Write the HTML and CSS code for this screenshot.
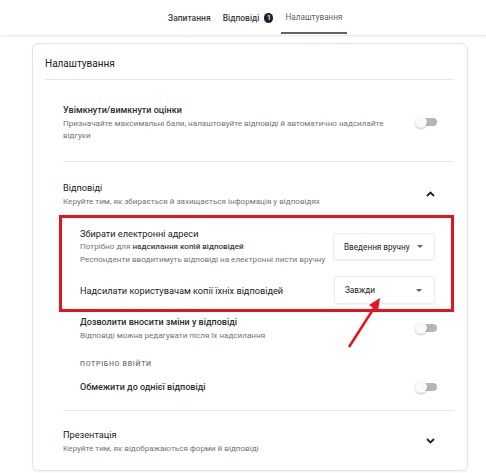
FILE: index.html
```html
<!DOCTYPE html>
<html lang="uk">
<head>
  <meta charset="UTF-8">
  <title>Налаштування</title>
  <link rel="stylesheet" href="styles.css">
</head>
<body>
  <!-- Tabs -->
  <div class="tabs">
    <div class="tab">Запитання</div>
    <div class="tab">Відповіді <span class="badge">1</span></div>
    <div class="tab active">Налаштування</div>
  </div>

  <div class="card">
    <div class="card-title">Налаштування</div>

    <!-- Grading -->
    <div class="section grading">
      <div class="row">
        <div class="text">
          <div class="title strong">Увімкнути/вимкнути оцінки</div>
          <div class="desc">Призначайте максимальні бали, налаштовуйте відповіді й автоматично надсилайте відгуки</div>
        </div>
        <div class="toggle"></div>
      </div>
    </div>

    <!-- Responses -->
    <div class="section responses">
      <div class="row">
        <div class="text">
          <div class="title">Відповіді</div>
          <div class="desc">Керуйте тим, як збирається й захищається інформація у відповідях</div>
        </div>
        <svg class="chevron" width="9" height="6" viewBox="0 0 9 6"><polyline points="1,5 4.5,1.5 8,5" fill="none" stroke="#202124" stroke-width="1.8"/></svg>
      </div>

      <div class="highlight">
        <div class="sub-row first">
          <div class="text">
            <div class="title">Збирати електронні адреси</div>
            <div class="desc">Потрібно для <b>надсилання копій відповідей</b></div>
            <div class="desc">Респонденти вводитимуть відповіді на електронні листи вручну</div>
          </div>
          <div class="select wide">Введення вручну <span class="caret"></span></div>
        </div>
        <div class="sub-row second">
          <div class="text">
            <div class="title">Надсилати користувачам копії їхніх відповідей</div>
          </div>
          <div class="select">Завжди <span class="caret"></span></div>
        </div>
      </div>

      <div class="sub-row edit">
        <div class="text">
          <div class="title strong">Дозволити вносити зміни у відповіді</div>
          <div class="desc">Відповіді можна редагувати після їх надсилання</div>
        </div>
        <div class="toggle"></div>
      </div>

      <div class="label">Потрібно ввійти</div>

      <div class="sub-row limit">
        <div class="text">
          <div class="title strong">Обмежити до однієї відповіді</div>
        </div>
        <div class="toggle"></div>
      </div>
    </div>

    <!-- Presentation -->
    <div class="section presentation">
      <div class="row">
        <div class="text">
          <div class="title">Презентація</div>
          <div class="desc">Керуйте тим, як відображаються форми й відповіді</div>
        </div>
        <svg class="chevron" width="9" height="6" viewBox="0 0 9 6"><polyline points="1,1 4.5,4.5 8,1" fill="none" stroke="#202124" stroke-width="1.8"/></svg>
      </div>
    </div>
  </div>

  <!-- Annotation arrow -->
  <svg class="arrow" width="486" height="473" viewBox="0 0 486 473">
    <line x1="349" y1="347" x2="374" y2="308" stroke="#e3141c" stroke-width="2.5"/>
    <polygon points="380,298 369,305 378,311" fill="#e3141c"/>
  </svg>
</body>
</html>
```

FILE: styles.css
```css
* {
  margin: 0;
  padding: 0;
  box-sizing: border-box;
}

body {
  font-family: Roboto, "Noto Sans", Arial, sans-serif;
  background: #fff;
  color: #202124;
  width: 486px;
  height: 473px;
  overflow: hidden;
  position: relative;
}

/* Tabs */
.tabs {
  display: flex;
  height: 36px;
  padding-left: 162px;
  border-bottom: 1px solid #ececec;
  box-shadow: 0 1px 2px rgba(0, 0, 0, 0.06);
}

.tab {
  display: flex;
  align-items: center;
  padding: 0 6px;
  font-size: 8.5px;
  font-weight: 500;
  color: #3c4043;
  height: 34px;
  padding-top: 1px;
}

.tab.active {
  margin-left: 2px;
  color: #5f6368;
  font-weight: 400;
  border-bottom: 2px solid #5f6368;
  padding: 0 4px;
  padding-top: 2px;
  font-size: 8.2px;
}

.badge {
  display: inline-flex;
  align-items: center;
  justify-content: center;
  width: 9px;
  height: 10px;
  border-radius: 5px;
  background: #202124;
  color: #fff;
  font-size: 7px;
  margin-left: 5px;
}

/* Card */
.card {
  margin: 7px 18px 0 32px;
  border: 1px solid #e3e3e3;
  border-radius: 6px;
  box-shadow: 0 1px 2px rgba(0, 0, 0, 0.06);
  padding: 0 13px 0 12px;
  height: 428px;
}

.card-title {
  font-size: 10px;
  height: 36px;
  padding-top: 14px;
  border-bottom: 1px solid #e8e8e8;
}

.section {
  margin-left: 18px;
}

.section + .section {
  border-top: 1px solid #e8e8e8;
}

.row,
.sub-row {
  display: flex;
  align-items: center;
  justify-content: space-between;
}

.text {
  flex: 1;
}

.title {
  font-size: 9.2px;
  line-height: 14px;
  color: #202124;
}

.title.strong {
  font-weight: 500;
  font-size: 9px;
  color: #2d2e30;
}

.desc {
  font-size: 8.1px;
  line-height: 12px;
  color: #70757a;
}

.desc b {
  font-weight: 500;
  color: #3c4043;
}

.grading {
  padding: 23px 0 20px;
}

.grading .desc {
  max-width: 335px;
}

.responses {
  padding: 19px 0 16px;
}

.presentation {
  padding: 17px 0 0;
}

.chevron {
  margin-right: 19px;
}

/* Toggle (off) */
.toggle {
  position: relative;
  width: 22px;
  height: 12px;
  margin-right: 17px;
  flex-shrink: 0;
}

.toggle::before {
  content: "";
  position: absolute;
  left: 3px;
  right: 0;
  top: 2px;
  height: 8px;
  border-radius: 4px;
  background: #b5b5b5;
}

.toggle::after {
  content: "";
  position: absolute;
  left: 0;
  top: 0;
  width: 12px;
  height: 12px;
  border-radius: 50%;
  background: #fafafa;
  box-shadow: 0 1px 2px rgba(0, 0, 0, 0.25);
}

/* Highlighted block */
.highlight {
  margin: 8px 0 0 -4px;
  border: 3px solid #e3141c;
  padding: 9px 16px 5px 18px;
}

.highlight .title,
.highlight .desc {
  line-height: 13px;
}

.highlight .sub-row.second {
  margin-top: 10px;
}

.select {
  display: flex;
  align-items: center;
  justify-content: space-between;
  width: 101px;
  height: 28px;
  padding: 0 12px 0 10px;
  border: 1px solid #ececec;
  border-radius: 2px;
  box-shadow: 0 1px 2px rgba(0, 0, 0, 0.06);
  font-size: 8.2px;
  white-space: nowrap;
  color: #202124;
}

.select.wide {
  width: 102px;
  height: 27px;
  padding-right: 11px;
}

.caret {
  width: 0;
  height: 0;
  border-left: 3px solid transparent;
  border-right: 3px solid transparent;
  border-top: 3px solid #5f6368;
}

.sub-row.edit {
  margin-left: 17px;
  padding-top: 3px;
}

.label {
  margin: 17px 0 0 17px;
  font-size: 7px;
  font-weight: 500;
  letter-spacing: 0.7px;
  text-transform: uppercase;
  color: #70757a;
  line-height: 12px;
}

.sub-row.limit {
  margin-left: 17px;
  margin-top: 10px;
}

/* Annotation overlay */
.arrow {
  position: absolute;
  left: 0;
  top: 0;
  pointer-events: none;
}
```
